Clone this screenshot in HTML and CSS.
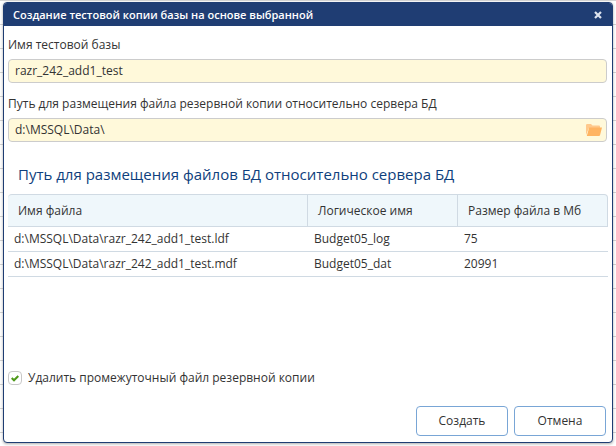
FILE: index.html
```html
<!DOCTYPE html>
<html lang="ru">
<head>
<meta charset="utf-8">
<title>Создание тестовой копии базы</title>
<link rel="stylesheet" href="styles.css">
</head>
<body>
<form class="dialog" role="dialog" aria-labelledby="dialog-title">
  <header class="titlebar">
    <h1 class="title" id="dialog-title">Создание тестовой копии базы на основе выбранной</h1>
    <button class="icon-button" type="button" aria-label="Закрыть">
      <svg width="8" height="8" viewBox="0 0 8 8"><path d="M1 1L7 7M7 1L1 7" stroke="#dde3ee" stroke-width="2.2"/></svg>
    </button>
  </header>
  <div class="content">
    <label class="label" for="base-name">Имя тестовой базы</label>
    <div class="field"><input class="input" id="base-name" type="text" value="razr_242_add1_test"></div>
    <label class="label" for="backup-path">Путь для размещения файла резервной копии относительно сервера БД</label>
    <div class="field">
      <input class="input" id="backup-path" type="text" value="d:\MSSQL\Data\">
      <button class="icon-button" type="button" aria-label="Выбрать папку">
        <svg width="16" height="12" viewBox="0 0 16 12"><path d="M0 1.2Q0 0 1.2 0H5L6.5 1.5H13Q14 1.5 14 2.5V4H3L0 11Z" fill="#ffc98c"/><path d="M3.2 3.6H16L14 11.2Q13.8 12 13 12H.8Z" fill="#ffb461"/></svg>
      </button>
    </div>
    <h2 class="heading">Путь для размещения файлов БД относительно сервера БД</h2>
    <table class="files">
      <thead>
        <tr><th class="wide">Имя файла</th><th>Логическое имя</th><th>Размер файла в Мб</th></tr>
      </thead>
      <tbody>
        <tr><td>d:\MSSQL\Data\razr_242_add1_test.ldf</td><td>Budget05_log</td><td>75</td></tr>
        <tr><td>d:\MSSQL\Data\razr_242_add1_test.mdf</td><td>Budget05_dat</td><td>20991</td></tr>
      </tbody>
    </table>
    <div class="option">
      <span class="check">
        <input class="checkbox" id="remove-file" type="checkbox" checked>
        <svg class="tick" width="8" height="7" viewBox="0 0 8 7"><path d="M.7 3L3 5.3L7.3 1" fill="none" stroke="#4f9a1c" stroke-width="2.1"/></svg>
      </span>
      <label for="remove-file">Удалить промежуточный файл резервной копии</label>
    </div>
    <footer class="actions">
      <button class="button" type="submit">Создать</button>
      <button class="button" type="button">Отмена</button>
    </footer>
  </div>
</form>
</body>
</html>
```
FILE: styles.css
```css
* { box-sizing: border-box; }

body {
  display: flex;
  min-height: 100vh;
  margin: 0;
  padding: 2px 3px 3px;
  background: linear-gradient(#d4d4d4 1px, #fff 1px) 0 0 / 100% 24px;
  color: #333;
  font: 12px/16px "Open Sans", "Noto Sans", sans-serif;
}

button, input { font: inherit; color: inherit; }

.dialog {
  display: flex;
  flex: 1;
  flex-direction: column;
  overflow: hidden;
  border: 1px solid #1f3d73;
  border-radius: 4px;
  background: #fff;
  box-shadow: 0 1px 3px #0005;
}

.titlebar {
  display: flex;
  align-items: center;
  justify-content: space-between;
  height: 23px;
  padding: 0 10px 0 9px;
  background: #1f3d73;
  color: #fff;
}

.title { margin: 0; font-size: 11px; font-weight: 600; }

.icon-button {
  display: flex;
  padding: 0;
  border: 0;
  background: none;
}

.content {
  display: flex;
  flex: 1;
  flex-direction: column;
  padding: 11px 4px 6px;
}

.label { margin: 0 0 6px; }

.field {
  display: flex;
  align-items: center;
  height: 24px;
  margin: 0 1px 13px 0;
  padding: 0 4px 0 6px;
  border: 1px solid #ccc;
  border-radius: 4px;
  background: #fff9da;
}

.input {
  flex: 1;
  min-width: 0;
  padding: 0;
  border: 0;
  outline: 0;
  background: none;
}

.heading {
  margin: 8px 10px 9px;
  color: #0f3f7d;
  font-size: 15px;
  font-weight: 400;
  line-height: 22px;
}

.files {
  width: 100%;
  table-layout: fixed;
  border-spacing: 0;
}

.files th {
  height: 33px;
  padding: 0 10px;
  border: solid #d0dae3;
  border-width: 1px 1px 1px 0;
  background: #eff7fb;
  font-weight: 400;
  text-align: left;
}

.files th:first-child { border-top-left-radius: 4px; }
.files th:last-child { border-top-right-radius: 4px; }
.files .wide { width: 50%; }

.files td {
  height: 25px;
  padding: 0 6px;
  border-bottom: 1px solid #d0dae3;
}

.option {
  display: flex;
  align-items: center;
  gap: 6px;
  margin-top: auto;
}

.check { position: relative; display: flex; }

.checkbox {
  width: 14px;
  height: 14px;
  margin: 0;
  appearance: none;
  border: 1px solid #c8c8c8;
  border-radius: 4px;
  background: #fff;
}

.tick {
  position: absolute;
  inset: 0;
  margin: auto;
  visibility: hidden;
  pointer-events: none;
}

.checkbox:checked + .tick { visibility: visible; }

.actions {
  display: flex;
  justify-content: flex-end;
  gap: 6px;
  margin: 20px 2px 0;
}

.button {
  width: 92px;
  height: 30px;
  padding: 0;
  border: 1px solid #79a6d6;
  border-radius: 4px;
  background: #fff;
}
```
